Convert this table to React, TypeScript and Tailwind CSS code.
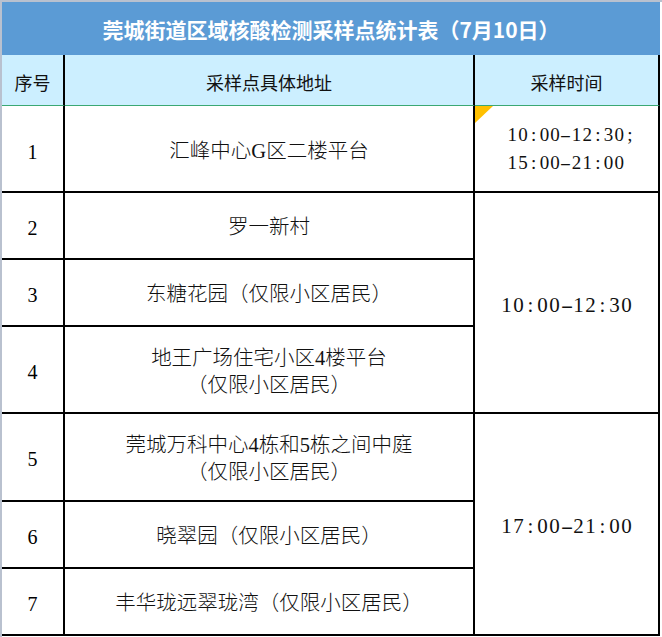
import React from 'react';

// 采样点数据
const sites = [
  { no: '2', addr: ['罗一新村'] },
  { no: '3', addr: ['东糖花园（仅限小区居民）'] },
  { no: '4', addr: ['地王广场住宅小区4楼平台', '（仅限小区居民）'] },
];

const sites2 = [
  { no: '5', addr: ['莞城万科中心4栋和5栋之间中庭', '（仅限小区居民）'] },
  { no: '6', addr: ['晓翠园（仅限小区居民）'] },
  { no: '7', addr: ['丰华珑远翠珑湾（仅限小区居民）'] },
];

const cell = 'flex items-center justify-center border-r-2 border-b-2 border-black bg-white';
const serif = "font-['Liberation_Serif','Noto_Sans_CJK_SC',serif]";

const Addr: React.FC<{ lines: string[] }> = ({ lines }) => (
  <div className={`${serif} text-[20.5px] font-light leading-[27px] text-center text-[#111]`}>
    {lines.map((l, i) => (
      <div key={i}>{l}</div>
    ))}
  </div>
);

// 等宽数字（模拟宋体半角）
const Time: React.FC<{ text: string; big?: boolean }> = ({ text, big }) => (
  <div className={`${serif} flex text-[#111] ${big ? 'text-[21px]' : 'text-[19px]'}`}>
    {text.split('').map((c, i) => (
      <span
        key={i}
        className={`inline-block text-center ${big ? 'w-[12px]' : 'w-[10.7px]'} ${c === '-' ? 'scale-x-[1.8]' : ''}`}
      >
        {c}
      </span>
    ))}
  </div>
);

const App: React.FC = () => {
  return (
    <div className="w-[662px] h-[637px] bg-white border-t-2 border-l-2 border-[#b9c1cf] overflow-hidden">
      <div className="grid grid-cols-[63px_410px_185px] grid-rows-[53px_51px_87px_67px_67px_87px_88px_67px_67px]">
        {/* 标题 */}
        <div className="col-span-3 flex items-center justify-center bg-[#5b9bd5] pt-[3px]">
          <span className="font-['Noto_Sans_CJK_SC',sans-serif] font-bold text-[21px] text-white">
            莞城街道区域核酸检测采样点统计表（7月10日）
          </span>
        </div>

        {/* 表头 */}
        {['序号', '采样点具体地址', '采样时间'].map((h) => (
          <div
            key={h}
            className="flex items-center justify-center bg-[#ccefff] border-r-2 border-black border-b border-b-[#3aa874] pt-[4px]"
          >
            <span className="font-['Noto_Sans_CJK_SC',sans-serif] text-[18px] text-[#111]">{h}</span>
          </div>
        ))}

        {/* 第1行 */}
        <div className={`${cell} ${serif} text-[20px] pt-[6px]`}>1</div>
        <div className={`${cell} pt-[6px]`}>
          <Addr lines={['汇峰中心G区二楼平台']} />
        </div>
        <div className={`${cell} relative !justify-start pl-[32px] pt-[1px]`}>
          <div className="absolute left-0 top-0 w-0 h-0 border-t-[17px] border-t-[#ffc000] border-r-[18px] border-r-transparent" />
          <div className="leading-[28px]">
            <Time text="10:00-12:30;" />
            <Time text="15:00-21:00" />
          </div>
        </div>

        {/* 第2-4行 */}
        {sites.map((s, i) => (
          <React.Fragment key={s.no}>
            <div className={`${cell} ${serif} text-[20px] pt-[4px]`}>{s.no}</div>
            <div className={`${cell} pt-[4px]`}>
              <Addr lines={s.addr} />
            </div>
            {i === 0 && (
              <div className={`${cell} row-span-3 pt-[6px]`}>
                <Time text="10:00-12:30" big />
              </div>
            )}
          </React.Fragment>
        ))}

        {/* 第5-7行 */}
        {sites2.map((s, i) => (
          <React.Fragment key={s.no}>
            <div className={`${cell} ${serif} text-[20px] pt-[4px]`}>{s.no}</div>
            <div className={`${cell} pt-[4px]`}>
              <Addr lines={s.addr} />
            </div>
            {i === 0 && (
              <div className={`${cell} row-span-3 pt-[6px]`}>
                <Time text="17:00-21:00" big />
              </div>
            )}
          </React.Fragment>
        ))}
      </div>
    </div>
  );
};

export default App;
